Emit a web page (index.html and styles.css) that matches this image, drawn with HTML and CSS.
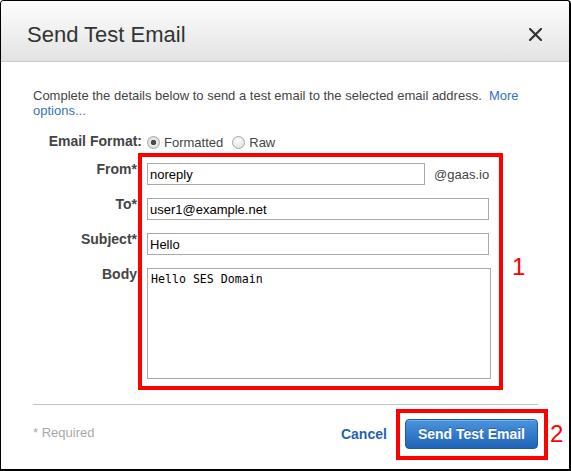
FILE: index.html
```html
<!DOCTYPE html>
<html lang="en">
<head>
<meta charset="utf-8">
<title>Send Test Email</title>
<link rel="stylesheet" href="styles.css">
</head>
<body>
<div class="dialog">
  <div class="header">
    <h1 class="title">Send Test Email</h1>
    <button class="close" type="button" aria-label="Close">
      <svg width="13" height="13" viewBox="0 0 13 13"><path d="M1 1 L12 12 M12 1 L1 12" stroke="#333" stroke-width="2.2" stroke-linecap="square" fill="none"/></svg>
    </button>
  </div>
  <div class="content">
    <p class="intro">Complete the details below to send a test email to the selected email address.&nbsp; <a class="link" href="#">More options...</a></p>
    <div class="form">
      <label class="lbl lbl-fmt">Email Format:</label>
      <div class="radios">
        <input class="radio" type="radio" name="fmt" checked><span class="rtext">Formatted</span>
        <input class="radio radio-2" type="radio" name="fmt"><span class="rtext">Raw</span>
      </div>

      <label class="lbl">From*</label>
      <div class="field-from">
        <input class="inp inp-from" type="text" value="noreply">
        <span class="suffix">@gaas.io</span>
      </div>

      <label class="lbl">To*</label>
      <input class="inp inp-wide" type="text" value="user1@example.net">

      <label class="lbl">Subject*</label>
      <input class="inp inp-wide" type="text" value="Hello">

      <label class="lbl">Body</label>
      <textarea class="body-text">Hello SES Domain</textarea>
    </div>
    <div class="footer">
      <span class="required">* Required</span>
      <div class="actions">
        <a class="cancel" href="#">Cancel</a>
        <button class="send" type="button">Send Test Email</button>
      </div>
    </div>
  </div>
  <div class="annot annot-box1"></div>
  <span class="annot-num num1">1</span>
  <div class="annot annot-box2"></div>
  <span class="annot-num num2">2</span>
</div>
</body>
</html>
```

FILE: styles.css
```css
html, body {
  margin: 0;
  padding: 0;
  background: #fff;
}

.dialog {
  position: relative;
  box-sizing: border-box;
  width: 571px;
  height: 471px;
  border: 1px solid #000;
  border-right-width: 2px;
  border-bottom-width: 2px;
  border-radius: 4px 4px 0 0;
  overflow: hidden;
  background: #fff;
  font-family: "Liberation Sans", Arial, sans-serif;
  color: #444;
}

.header {
  box-sizing: border-box;
  height: 61px;
  padding: 21px 26px 0 26px;
  display: flex;
  justify-content: space-between;
  align-items: flex-start;
  background: linear-gradient(#fdfdfd, #e3e3e3);
  border-bottom: 1px solid #c8c8c8;
}

.title {
  margin: 0;
  font-size: 22px;
  line-height: 26px;
  font-weight: normal;
  color: #333;
}

.close {
  margin: 6px 1px 0 0;
  padding: 0;
  border: 0;
  background: none;
  width: 13px;
  height: 13px;
  display: block;
}
.close svg { display: block; }

.content {
  padding: 26px 31px 0 32px;
}

.intro {
  margin: 0;
  font-size: 13px;
  line-height: 15px;
  color: #444;
}

.link {
  color: #3872b8;
  text-decoration: none;
}

.form {
  margin-top: 14px;
  display: grid;
  grid-template-columns: 105px 1fr;
  column-gap: 9px;
  row-gap: 13px;
  align-items: start;
}

.lbl {
  font-size: 14px;
  font-weight: bold;
  line-height: 12px;
  text-align: right;
  color: #444;
  padding-right: 1px;
}

.lbl-fmt {
  line-height: 18px;
  margin-right: -5px;
}

.radios {
  display: flex;
  align-items: center;
  height: 18px;
  font-size: 13px;
  color: #444;
  padding-top: 2px;
  box-sizing: border-box;
}

.radio {
  appearance: none;
  -webkit-appearance: none;
  margin: 0 4px 0 0;
  width: 13px;
  height: 13px;
  border-radius: 50%;
  border: 1px solid #a6a6a6;
  background: radial-gradient(circle at 40% 35%, #fdfdfd, #dcdcdc);
  box-sizing: border-box;
  position: relative;
}
.radio:checked {
  background: radial-gradient(circle, #4a4a4a 0 2.5px, #e8e8e8 3px, #d6d6d6 100%);
}
.radio-2 { margin-left: 9px; }

.rtext { line-height: 15px; }

.field-from {
  display: flex;
  align-items: center;
}

.inp {
  box-sizing: border-box;
  height: 22px;
  margin: 0;
  padding: 0 2px;
  border: 1px solid #a9a9a9;
  font-family: "Liberation Sans", Arial, sans-serif;
  font-size: 13px;
  color: #000;
  background: #fff;
  outline: none;
}

.inp-from { width: 278px; }
.inp-wide { width: 342px; }

.suffix {
  margin-left: 9px;
  font-size: 13px;
  color: #444;
}

.body-text {
  box-sizing: border-box;
  width: 344px;
  height: 111px;
  margin: 0;
  padding: 3px 3px;
  border: 1px solid #a9a9a9;
  resize: none;
  font-family: "DejaVu Sans Mono", monospace;
  font-size: 11.6px;
  line-height: 14px;
  color: #000;
  outline: none;
}

.footer {
  margin-top: 25px;
  border-top: 1px solid #c4c4c4;
  padding-top: 14px;
  display: flex;
  justify-content: space-between;
  align-items: center;
}

.required {
  font-size: 13px;
  line-height: 15px;
  color: #a8a8a8;
  margin-bottom: 4px;
}

.actions {
  display: flex;
  align-items: center;
  gap: 18px;
}

.cancel {
  font-size: 14px;
  font-weight: bold;
  line-height: 16px;
  color: #2563ab;
  text-decoration: none;
}

.send {
  box-sizing: border-box;
  height: 30px;
  padding: 0 12px;
  margin: 0;
  border: 1px solid #1b5ba5;
  border-radius: 4px;
  background: linear-gradient(#4a94df, #1f63b6);
  color: #fff;
  font-family: "Liberation Sans", Arial, sans-serif;
  font-size: 14px;
  font-weight: bold;
  text-shadow: 0 -1px 0 rgba(0, 0, 0, 0.25);
  box-shadow: inset 0 1px 0 rgba(255, 255, 255, 0.25);
}

/* annotation overlays */
.annot {
  position: absolute;
  box-sizing: border-box;
  border: 4px solid #ff0000;
}
.annot-box1 {
  left: 137px;
  top: 152px;
  width: 365px;
  height: 237px;
}
.annot-box2 {
  left: 395px;
  top: 408px;
  width: 152px;
  height: 51px;
}

.annot-num {
  position: absolute;
  font-family: "Liberation Sans", Arial, sans-serif;
  font-size: 24px;
  line-height: 24px;
  color: #ff0000;
}
.num1 {
  left: 511px;
  top: 254px;
}
.num2 {
  left: 549px;
  top: 421px;
}
```
